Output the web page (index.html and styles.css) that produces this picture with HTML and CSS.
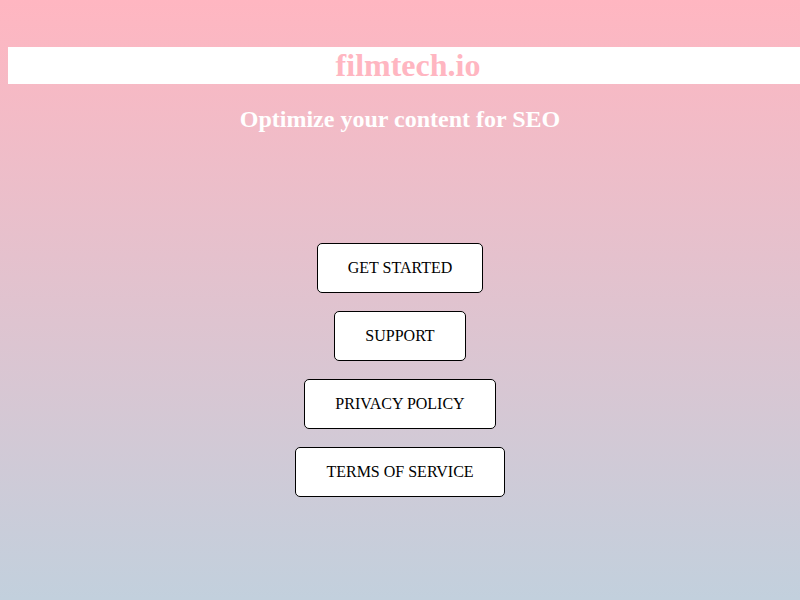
FILE: index.html
```html
<!DOCTYPE html>
<html>
<head>
<meta charset="utf-8">
<link rel="stylesheet" href="styles.css">
</head>
<body>
<header class="brand">filmtech.io</header>
<h2 class="tagline">Optimize your content for SEO</h2>
<nav class="actions">
  <a class="btn">GET STARTED</a>
  <a class="btn">SUPPORT</a>
  <a class="btn">PRIVACY POLICY</a>
  <a class="btn">TERMS OF SERVICE</a>
</nav>
</body>
</html>
```
FILE: styles.css
```css
html, body {
  margin: 0;
  height: 100%;
}
body {
  background: linear-gradient(to bottom, #ffb6c1 0%, #c2d0dd 100%);
  font-family: "Liberation Serif", "Times New Roman", serif;
  overflow: hidden;
}
.brand {
  margin: 47px 0 0 8px;
  width: 100vw;
  background: #ffffff;
  color: #ffb6c1;
  font-size: 32px;
  font-weight: bold;
  text-align: center;
  height: 37px;
  line-height: 37px;
}
.tagline {
  margin: 21px 0 0;
  color: #ffffff;
  font-size: 24px;
  font-weight: bold;
  text-align: center;
  line-height: 28px;
}
.actions {
  margin-top: 110px;
  display: flex;
  flex-direction: column;
  align-items: center;
  gap: 18px;
}
.btn {
  display: block;
  box-sizing: border-box;
  height: 50px;
  line-height: 48px;
  padding: 0 30px;
  background: #ffffff;
  border: 1px solid #000000;
  border-radius: 5px;
  color: #000000;
  font-size: 16px;
  text-decoration: none;
}
```
